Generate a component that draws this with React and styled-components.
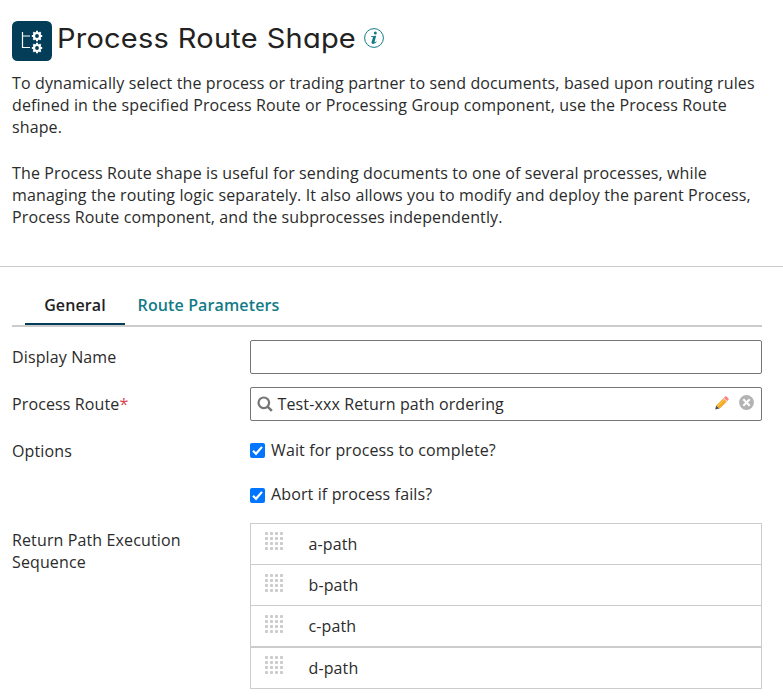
import React from "react";
import styled, { createGlobalStyle } from "styled-components";

const GlobalStyle = createGlobalStyle`
  *, *::before, *::after { box-sizing: border-box; }
  body {
    margin: 0;
    background: #fff;
    color: #2b2b2b;
    font: 16px/22px "Open Sans", "Noto Sans", sans-serif;
    letter-spacing: 0.125px;
    overflow: hidden;
  }
`;

const Page = styled.main`
  width: 783px;
  height: 700px;
  overflow: hidden;
`;

const Intro = styled.header`
  height: 267px;
  padding: 21px 12px 0;
  border-bottom: 1px solid #ccc;
`;

const TitleRow = styled.div`
  display: flex;
  height: 40px;
`;

const ShapeIcon = styled.svg`
  width: 40px;
  height: 40px;
  flex: none;
`;

const Title = styled.h1`
  width: 306px;
  margin: -3px 0 0 5px;
  font: 430 27.5px/40px Inter, "Open Sans", sans-serif;
  font-feature-settings: "cv11" 1;
  letter-spacing: 0.2px;
  word-spacing: 0.5px;
  color: #222;
  white-space: nowrap;
  transform: scaleX(1.055);
  transform-origin: left;
`;

const InfoIcon = styled.svg`
  width: 20px;
  height: 20px;
  margin: 7px 0 0 1px;
  flex: none;
`;

const Paragraph = styled.p`
  margin: ${(p) => (p.$first ? "11px" : "24px")} 0 0;
  white-space: nowrap;
`;

const Body = styled.section`
  width: 762px;
  padding-left: 12px;
`;

const TabBar = styled.nav`
  display: flex;
  height: 60px;
  padding: 26px 0 0 13px;
  border-bottom: 2px solid #ccc;
`;

const Tab = styled.a`
  width: ${(p) => p.$width}px;
  padding-top: 1px;
  text-align: center;
  font-weight: 600;
  line-height: 22px;
  color: ${(p) => (p.$active ? "#222" : "#127b87")};
  border-bottom: 2px solid ${(p) => (p.$active ? "#033d58" : "transparent")};
`;

const Form = styled.form`
  display: grid;
  grid-template-columns: 238px 512px;
  margin-top: 13px;
`;

const Label = styled.div`
  padding-top: 6px;
  min-height: ${(p) => p.$height}px;
`;

const Required = styled.span`
  color: #d9434e;
`;

const Field = styled.div`
  display: flex;
  align-items: center;
  height: 34px;
  padding: 0 6px;
  border: 1px solid #767676;
  border-radius: 2px;
`;

const TextInput = styled.input`
  width: 100%;
  height: 34px;
  border: 1px solid #767676;
  border-radius: 2px;
  padding: 0 6px;
  font: inherit;
  outline: none;
`;

const FieldText = styled.span`
  flex: 1;
  margin-left: 4.5px;
`;

const Glyph = styled.svg`
  width: ${(p) => p.$size}px;
  height: ${(p) => p.$size}px;
  margin-right: ${(p) => p.$gap || 0}px;
  flex: none;
`;

const LiftedGlyph = styled(Glyph)`
  margin-bottom: 3px;
`;

const Options = styled.div`
  display: flex;
  flex-direction: column;
  gap: 22px;
  padding-top: 5px;
  height: 89px;
`;

const Option = styled.label`
  display: flex;
  gap: 6px;
  height: 22px;
`;

const CheckMark = styled.svg`
  width: 15px;
  height: 15px;
  margin-top: ${(p) => p.$top}px;
  flex: none;
`;

const List = styled.ul`
  list-style: none;
  margin: 0;
  padding: 0;
  border: 1px solid #ccc;
`;

const Item = styled.li`
  display: flex;
  height: ${(p) => p.$height}px;
  padding: ${(p) => p.$pad}px 0 0 14px;
  border-bottom: ${(p) => p.$line}px solid #ccc;
`;

const Grip = styled.svg`
  width: 18px;
  height: 18px;
  flex: none;
`;

const ItemName = styled.span`
  margin: ${(p) => p.$top}px 0 0 25.5px;
  line-height: 22px;
`;

function Gear({ x, y }) {
  return (
    <g transform={`translate(${x} ${y})`} stroke="#fff" fill="none">
      <circle r="3" strokeWidth="2.2" />
      {[0, 45, 90, 135, 180, 225, 270, 315].map((a) => (
        <path key={a} d="M0-3.4V-5.2" strokeWidth="2" transform={`rotate(${a})`} />
      ))}
    </g>
  );
}

function Checkbox({ top }) {
  return (
    <CheckMark $top={top} viewBox="0 0 15 15">
      <rect width="15" height="15" rx="2" fill="#0075ff" />
      <path d="M3 7.8 6 10.8 12 3.9" fill="none" stroke="#fff" strokeWidth="2.2" />
    </CheckMark>
  );
}

function DragGrip() {
  return (
    <Grip viewBox="0 0 18 18" fill="#ccc">
      {[0, 5, 10, 15].map((y) =>
        [0, 5, 10, 15].map((x) => (
          <rect key={`${x}-${y}`} x={x} y={y} width="3" height="3" rx=".8" />
        ))
      )}
    </Grip>
  );
}

const paths = [
  { name: "a-path", height: 41, line: 1, pad: 8, top: 1 },
  { name: "b-path", height: 41, line: 1, pad: 9, top: 0 },
  { name: "c-path", height: 42, line: 2, pad: 9, top: 0 },
  { name: "d-path", height: 40, line: 0, pad: 8, top: 1 },
];

export default function App() {
  return (
    <Page>
      <GlobalStyle />
      <Intro>
        <TitleRow>
          <ShapeIcon viewBox="0 0 40 40">
            <rect width="40" height="40" rx="5.5" fill="#033d58" />
            <path d="M10.5 11v15.5H18M10.5 15H18" fill="none" stroke="#fff" strokeWidth="1.2" />
            <Gear x={25} y={15} />
            <Gear x={25} y={27} />
          </ShapeIcon>
          <Title>Process Route Shape</Title>
          <InfoIcon viewBox="0 0 20 20">
            <circle cx="10" cy="10" r="9.4" fill="none" stroke="#127b87" />
            <circle cx="11.3" cy="5.1" r="1.5" fill="#127b87" />
            <path d="M7 8.3 12.2 7.8 10.5 14c-.1.5.3.5 1.8-.8l.4.5c-1.2 1.4-2.4 2.2-3.7 2.2-1.2 0-1.7-.8-1.4-1.9L9 9.3c.1-.4-.4-.4-2-.4Z" fill="#127b87" />
          </InfoIcon>
        </TitleRow>
        <Paragraph $first>
          To dynamically select the process or trading partner to send documents, based upon routing rules<br />
          defined in the specified Process Route or Processing Group component, use the Process Route<br />
          shape.
        </Paragraph>
        <Paragraph>
          The Process Route shape is useful for sending documents to one of several processes, while<br />
          managing the routing logic separately. It also allows you to modify and deploy the parent Process,<br />
          Process Route component, and the subprocesses independently.
        </Paragraph>
      </Intro>
      <Body>
        <TabBar>
          <Tab $active $width={100}>General</Tab>
          <Tab $width={167}>Route Parameters</Tab>
        </TabBar>
        <Form>
          <Label $height={47}>Display Name</Label>
          <TextInput aria-label="Display Name" />
          <Label $height={47}>Process Route<Required>*</Required></Label>
          <Field>
            <Glyph $size={16} viewBox="0 0 16 16" fill="none" stroke="#757575">
              <circle cx="6.8" cy="6.8" r="5.3" strokeWidth="2.2" />
              <path d="m10.8 10.8 4.1 4.1" strokeWidth="2.4" />
            </Glyph>
            <FieldText>Test-xxx Return path ordering</FieldText>
            <LiftedGlyph $size={16} $gap={9} viewBox="0 0 16 16">
              <path d="m1.2 14.6 1.1-4.3 3.2 3.2Z" fill="#46545b" />
              <path d="m2.3 10.4 7.3-7.3 3.3 3.3-7.3 7.3Z" fill="#f7a928" />
              <path d="m3.4 11.4 7.3-7.3" stroke="#ffd15c" strokeWidth="1" />
              <path d="m9.2 3.5.9-.9 3.3 3.3-.9.9Z" fill="#d8dce0" />
              <path d="m9.9 2.8 1.1-1.1c.5-.5 1.2-.5 1.7 0l1.6 1.6c.5.5.5 1.2 0 1.7l-1.1 1.1Z" fill="#ff7f86" />
            </LiftedGlyph>
            <LiftedGlyph $size={15} $gap={1} viewBox="0 0 15 15">
              <circle cx="7.5" cy="7.5" r="7.4" fill="#b3b3b3" />
              <path d="m4.3 4.3 6.4 6.4m0-6.4-6.4 6.4" stroke="#fff" strokeWidth="2.1" />
            </LiftedGlyph>
          </Field>
          <Label $height={89}>Options</Label>
          <Options>
            <Option><Checkbox top={4} />Wait for process to complete?</Option>
            <Option><Checkbox top={5} />Abort if process fails?</Option>
          </Options>
          <Label $height={166}>Return Path Execution<br />Sequence</Label>
          <List>
            {paths.map((p) => (
              <Item key={p.name} $height={p.height} $line={p.line} $pad={p.pad}>
                <DragGrip />
                <ItemName $top={p.top}>{p.name}</ItemName>
              </Item>
            ))}
          </List>
        </Form>
      </Body>
    </Page>
  );
}
